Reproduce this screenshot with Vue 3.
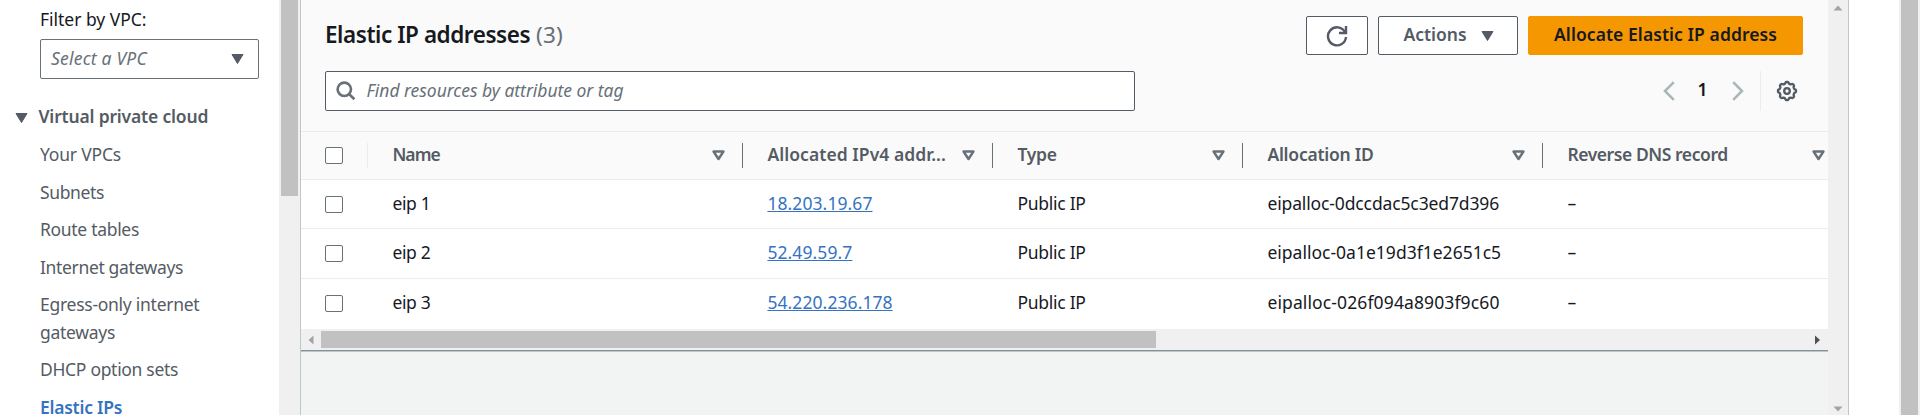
<script setup>
const track = (v) => ({ letterSpacing: v + 'px' })

const links = [
  { text: 'Your VPCs', ls: -0.19 },
  { text: 'Subnets', ls: -0.37 },
  { text: 'Route tables', ls: -0.31 },
  { text: 'Internet gateways', ls: -0.35 },
  { text: 'Egress-only internet gateways', ls: -0.27 },
  { text: 'DHCP option sets', ls: -0.31 },
  { text: 'Elastic IPs', ls: -0.24, active: true }
]

const columns = [
  { key: 'name', text: 'Name', ls: -0.9 },
  { key: 'ip', text: 'Allocated IPv4 addr...', ls: 0.06 },
  { key: 'type', text: 'Type', ls: -0.3 },
  { key: 'id', text: 'Allocation ID', ls: -0.24 },
  { key: 'dns', text: 'Reverse DNS record', ls: -0.43 }
]

const rows = [
  { name: 'eip 1', ip: '18.203.19.67', id: 'eipalloc-0dccdac5c3ed7d396', ls: -0.13 },
  { name: 'eip 2', ip: '52.49.59.7', id: 'eipalloc-0a1e19d3f1e2651c5', ls: 0.01 },
  { name: 'eip 3', ip: '54.220.236.178', id: 'eipalloc-026f094a8903f9c60', ls: 0.12 }
]

// Outline of the settings gear: eight rounded teeth around a ring.
const gear =
  'M' +
  Array.from({ length: 96 }, (_, i) => {
    const a = (i / 96) * Math.PI * 2
    const r = 8.25 + 0.8 * Math.tanh(2.2 * Math.cos(8 * a))
    return (r * Math.cos(a)).toFixed(2) + ' ' + (r * Math.sin(a)).toFixed(2)
  }).join('L') +
  'Z'
</script>

<template>
  <div class="page">
    <aside class="sidebar">
      <div class="label">Filter by VPC:</div>
      <div class="select">
        <span>Select a VPC</span>
        <svg class="caret" viewBox="0 0 13 10"><path d="M1 .5h11L6.5 9.5z" /></svg>
      </div>
      <div class="section">
        <svg class="caret" viewBox="0 0 13 10"><path d="M1 .5h11L6.5 9.5z" /></svg>
        <span>Virtual private cloud</span>
      </div>
      <nav class="links">
        <a v-for="l in links" :key="l.text" :class="{ active: l.active }" :style="track(l.ls)">{{ l.text }}</a>
      </nav>
    </aside>
    <div class="side-scroll"><div class="side-thumb"></div></div>

    <main class="main">
      <header class="head">
        <div class="title-row">
          <h2>Elastic IP addresses</h2>
          <span class="count">(3)</span>
          <div class="buttons">
            <button class="btn refresh">
              <svg width="22" height="22" viewBox="0 0 22 22">
                <path d="M20 12A9 9 0 1 1 18.800 6.800" />
                <path d="M20 1v7h-7" />
              </svg>
            </button>
            <button class="btn actions">
              <span>Actions</span>
              <svg class="caret" viewBox="0 0 13 10"><path d="M1 .5h11L6.5 9.5z" /></svg>
            </button>
            <button class="btn primary">Allocate Elastic IP address</button>
          </div>
        </div>
        <div class="tools">
          <div class="search">
            <svg width="20" height="20" viewBox="0 0 20 20">
              <circle cx="8.3" cy="8.3" r="6.7" />
              <path d="M13 13l5.4 5.3" />
            </svg>
            <span>Find resources by attribute or tag</span>
          </div>
          <div class="pager">
            <svg class="chev" viewBox="0 0 12 20"><path d="M10.8 1.2L2 10l8.8 8.8" /></svg>
            <b>1</b>
            <svg class="chev" viewBox="0 0 12 20"><path d="M1.2 1.2L10 10l-8.8 8.8" /></svg>
          </div>
          <div class="settings">
            <svg width="22" height="22" viewBox="-11 -11 22 22">
              <path :d="gear" />
              <circle r="2.8" />
            </svg>
          </div>
        </div>
      </header>

      <div class="table">
        <div class="tr thead">
          <div class="check"><i></i></div>
          <div v-for="c in columns" :key="c.key" class="th" :class="c.key">
            <span :style="track(c.ls)">{{ c.text }}</span>
            <svg class="sort" viewBox="0 0 13 11"><path d="M1.600 1.600h9.800L6.500 9z" /></svg>
          </div>
        </div>
        <div v-for="r in rows" :key="r.id" class="tr row">
          <div class="check"><i></i></div>
          <div class="td name">{{ r.name }}</div>
          <div class="td ip"><a>{{ r.ip }}</a></div>
          <div class="td type">Public IP</div>
          <div class="td id" :style="track(r.ls)">{{ r.id }}</div>
          <div class="td dns">–</div>
        </div>
      </div>

      <div class="hscroll">
        <svg width="6" height="10" viewBox="0 0 6 10"><path fill="#a3a3a3" d="M5.5 .5v9L.5 5z" /></svg>
        <div class="hthumb"></div>
        <svg class="right" width="6" height="10" viewBox="0 0 6 10"><path fill="#505050" d="M0 .5v9L5 5z" /></svg>
      </div>
      <div class="split"></div>
    </main>

    <div class="vscroll">
      <svg width="10" height="6" viewBox="0 0 10 6"><path d="M.5 5.5h9L5 .5z" /></svg>
      <svg width="10" height="6" viewBox="0 0 10 6"><path d="M.5 .5h9L5 5.5z" /></svg>
    </div>
    <div class="gutter"></div>
    <div class="page-scroll"><div></div></div>
  </div>
</template>

<style>
body {
  margin: 0;
  overflow: hidden;
}
</style>

<style scoped>
.page,
.page * {
  box-sizing: border-box;
}
.page {
  display: flex;
  width: 1920px;
  height: 415px;
  overflow: hidden;
  background: #fff;
  color: #16191f;
  font: 17.5px/27.5px 'Noto Sans', 'Open Sans', sans-serif;
  white-space: nowrap;
}
svg {
  display: block;
  flex: none;
}
.caret {
  width: 13px;
  height: 10px;
  fill: #545b64;
  stroke: #545b64;
  stroke-width: 1;
  stroke-linejoin: round;
}

.sidebar {
  width: 279px;
  flex: none;
  height: 415px;
  overflow: hidden;
  padding: 6px 0 0 40px;
}
.label {
  height: 33px;
  letter-spacing: -0.02px;
}
.select {
  width: 219px;
  height: 40px;
  border: 1px solid #687078;
  border-radius: 2px;
  display: flex;
  align-items: center;
  justify-content: space-between;
  padding: 0 14px 1px 10px;
  font-style: italic;
  color: #687078;
  letter-spacing: 0.21px;
}
.select .caret {
  margin-top: 1px;
}
.section {
  display: flex;
  align-items: center;
  gap: 10.5px;
  margin: 24px 0 0 -25px;
  height: 28px;
  color: #545b64;
  font-weight: 600;
  letter-spacing: -0.18px;
}
.section .caret {
  margin-top: 2px;
}
.links {
  margin-top: 10px;
  display: flex;
  flex-direction: column;
  gap: 10px;
  width: 185px;
  white-space: normal;
  color: #545b64;
}
.links .active {
  color: #3573c2;
  font-weight: 600;
}
.side-scroll {
  width: 22px;
  flex: none;
  background: #f0f0f0;
  border-right: 1px solid #bfc8c8;
  padding-left: 2px;
}
.side-thumb {
  width: 17px;
  height: 196px;
  background: #c1c1c1;
}

.main {
  width: 1527px;
  flex: none;
  background: #f2f3f3;
}
.head {
  height: 131px;
  background: #fafafa;
  padding: 16px 25px 0 24px;
}
.title-row {
  display: flex;
  height: 39px;
}
h2 {
  margin: 0;
  font-size: 22.5px;
  line-height: 37px;
  font-weight: 600;
  letter-spacing: -0.45px;
}
.count {
  font-size: 22.5px;
  line-height: 37px;
  margin-left: 6px;
  color: #687078;
  letter-spacing: 0.2px;
}
.buttons {
  margin-left: auto;
  display: flex;
  gap: 10px;
}
.btn {
  height: 39px;
  border: 1px solid #545b64;
  border-radius: 2px;
  background: #fff;
  color: #545b64;
  font: 600 17.5px/27.5px 'Noto Sans', 'Open Sans', sans-serif;
  display: flex;
  align-items: center;
  justify-content: center;
  padding: 0 0 1px;
}
.refresh {
  width: 62px;
}
.refresh svg {
  fill: none;
  stroke: #545b64;
  stroke-width: 2.4;
  margin-top: 1px;
}
.actions {
  width: 140px;
  gap: 14px;
  padding-left: 1px;
}
.actions .caret {
  margin-top: 1px;
}
.primary {
  width: 275px;
  background: #f59700;
  border-color: #f59700;
  color: #16191f;
  letter-spacing: 0.07px;
}
.tools {
  display: flex;
  align-items: center;
  height: 40px;
  margin-top: 16px;
}
.search {
  width: 810px;
  height: 40px;
  border: 1px solid #545b64;
  border-radius: 2px;
  background: #fff;
  display: flex;
  align-items: center;
  gap: 11px;
  padding-left: 9.5px;
  color: #687078;
  font-style: italic;
  letter-spacing: -0.03px;
}
.search svg {
  fill: none;
  stroke: #687078;
  stroke-width: 2.6;
}
.search span {
  margin-top: -1px;
}
.pager {
  margin-left: auto;
  display: flex;
  align-items: center;
  gap: 23px;
}
.pager b {
  width: 11px;
  text-align: center;
  font-weight: 600;
  margin: -2px 1px 0 -1px;
}
.chev {
  width: 12px;
  height: 20px;
  fill: none;
  stroke: #aab7b8;
  stroke-width: 2.6;
}
.settings {
  margin-left: 16px;
  width: 43px;
  height: 40px;
  border-left: 1px solid #eaeded;
  display: flex;
  align-items: center;
  justify-content: flex-end;
  padding-right: 5px;
}
.settings svg {
  fill: none;
  stroke: #545b64;
  stroke-width: 2.3;
}

.table {
  background: #fff;
}
.tr {
  display: grid;
  grid-template-columns: 67px 375px 250px 250px 300px 285px;
  align-items: center;
}
.thead {
  height: 49px;
  background: #fafafa;
  border-top: 1px solid #eaeded;
  border-bottom: 1px solid #eaeded;
  color: #545b64;
  font-weight: 600;
}
.row {
  height: 49px;
  border-bottom: 1px solid #eaeded;
}
.row + .row {
  height: 50px;
}
.row:last-child {
  border-bottom-color: #fff;
}
.check {
  height: 25px;
  display: flex;
  align-items: center;
  padding-left: 24px;
}
.thead .check {
  border-right: 1px solid #eaeded;
}
.check i {
  width: 18px;
  height: 17px;
  border: 1px solid #687078;
  border-radius: 2px;
  background: #fff;
}
.th {
  height: 25px;
  display: flex;
  align-items: center;
  justify-content: space-between;
  padding: 0 17px 0 24.4px;
  border-right: 1px solid #687078;
}
.th span {
  margin-top: -2px;
}
.th.dns {
  border-right: 0;
  padding-right: 3px;
}
.sort {
  width: 13px;
  height: 11px;
  fill: none;
  stroke: #687078;
  stroke-width: 2.5;
  stroke-linejoin: round;
}
.td {
  padding-left: 24.4px;
  margin-top: -1px;
}
.td.name {
  letter-spacing: -0.35px;
}
.td.type {
  letter-spacing: -0.27px;
}
.td a {
  color: #3573c2;
  letter-spacing: 0.08px;
  text-decoration: underline;
  text-decoration-thickness: 1px;
  text-underline-offset: 1px;
  text-decoration-skip-ink: none;
}

.hscroll {
  height: 21px;
  background: #f0f0f0;
  display: flex;
  align-items: center;
  padding: 0 7px 0 7px;
}
.hthumb {
  width: 835px;
  height: 17px;
  background: #c1c1c1;
  margin-left: 7px;
}
.right {
  margin-left: auto;
}
.split {
  height: 2px;
  background: #bcc7cc;
  border-top: 1px solid #879196;
}
.vscroll {
  width: 21px;
  flex: none;
  background: #f0f0f0;
  border-right: 1px solid #bfc8c8;
  display: flex;
  flex-direction: column;
  align-items: center;
  justify-content: space-between;
  padding: 5px 0 3px;
}
.vscroll path {
  fill: #a3a3a3;
}
.gutter {
  width: 50px;
  flex: none;
}
.page-scroll {
  flex: 1;
  background: #f0f0f0;
  padding-left: 2px;
}
.page-scroll div {
  width: 17px;
  height: 415px;
  background: #c1c1c1;
}
</style>
